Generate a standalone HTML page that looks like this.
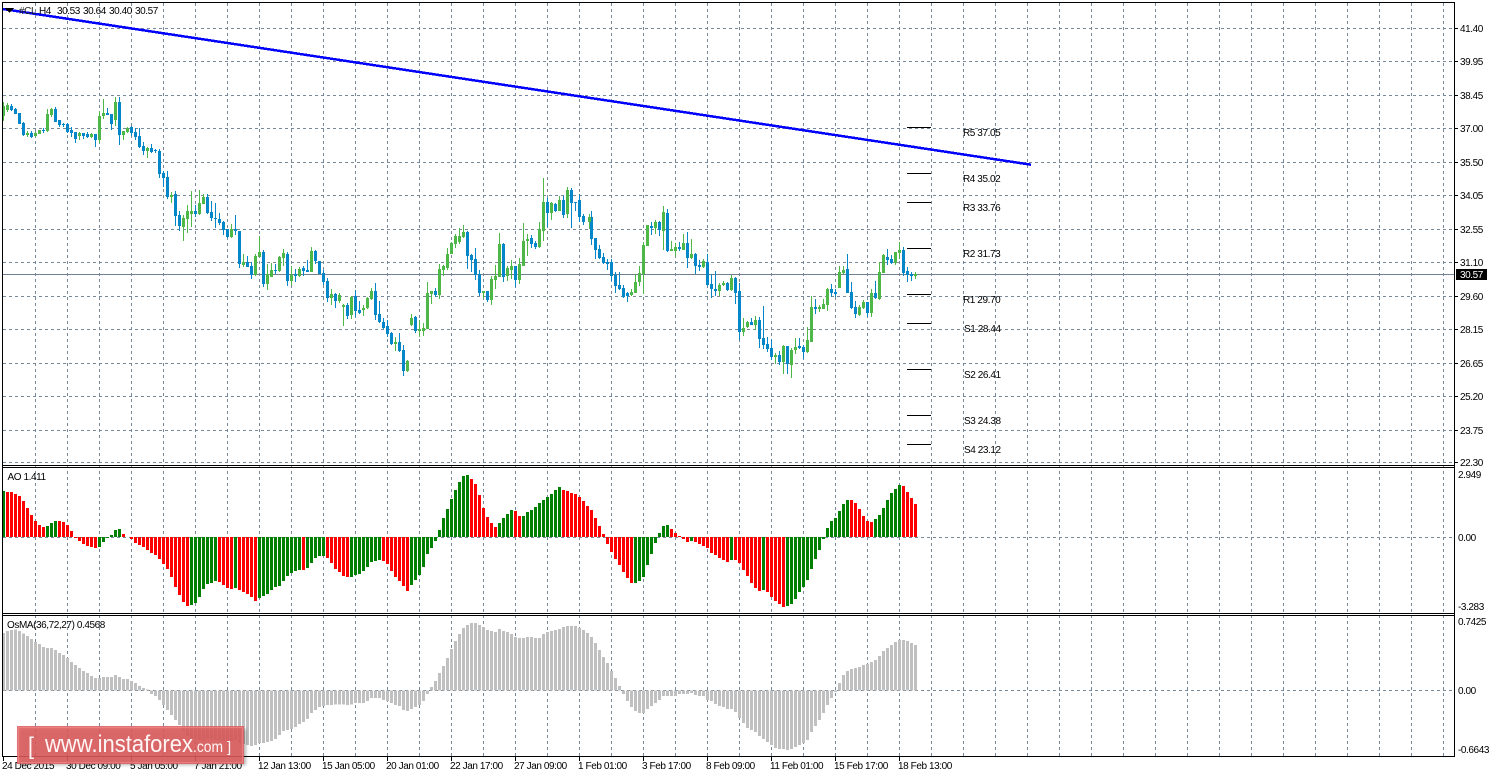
<!DOCTYPE html>
<html><head><meta charset="utf-8"><title>#CL H4</title>
<style>
html,body{margin:0;padding:0;background:#fff;width:1494px;height:777px;overflow:hidden}
svg{display:block}
text{font-family:"Liberation Sans",sans-serif;font-size:10px;letter-spacing:-.42px;fill:#000}
.c path{fill:none;shape-rendering:crispEdges}
</style></head><body>
<svg width="1494" height="777" viewBox="0 0 1494 777" xmlns="http://www.w3.org/2000/svg">
<rect width="1494" height="777" fill="#fff"/>
<g class="c">
<!-- grid -->
<path stroke="#778899" stroke-dasharray="3 3" d="M35.5 3V756M67.5 3V756M99.5 3V756M131.5 3V756M163.5 3V756M195.5 3V756M227.5 3V756M259.5 3V756M291.5 3V756M323.5 3V756M355.5 3V756M387.5 3V756M419.5 3V756M451.5 3V756M483.5 3V756M515.5 3V756M547.5 3V756M579.5 3V756M611.5 3V756M643.5 3V756M675.5 3V756M707.5 3V756M739.5 3V756M771.5 3V756M803.5 3V756M835.5 3V756M867.5 3V756M899.5 3V756M931.5 3V756M963.5 3V756M995.5 3V756M1027.5 3V756M1059.5 3V756M1091.5 3V756M1123.5 3V756M1155.5 3V756M1187.5 3V756M1219.5 3V756M1251.5 3V756M1283.5 3V756M1315.5 3V756M1347.5 3V756M1379.5 3V756M1411.5 3V756M1443.5 3V756"/>
<path stroke="#778899" stroke-dasharray="3 3" d="M3 28.5H1454M3 61.5H1454M3 95.5H1454M3 128.5H1454M3 162.5H1454M3 195.5H1454M3 229.5H1454M3 262.5H1454M3 296.5H1454M3 329.5H1454M3 363.5H1454M3 396.5H1454M3 430.5H1454M3 462.5H1454M3 537.5H1454M3 690.5H1454"/>
<!-- current price line -->
<path stroke="#708090" d="M3 274.5H1454"/>
<!-- wicks -->
<path stroke="#0487c8" d="M11.5 104V111M15.5 108V114M19.5 113V124M23.5 122V136M31.5 131V138M43.5 128V133M55.5 107V122M59.5 120V127M63.5 123V127M67.5 123V133M71.5 127V137M75.5 132V143M83.5 133V139M87.5 132V138M95.5 134V147M107.5 108V115M111.5 114V130M119.5 97V145M131.5 126V136M135.5 128V140M139.5 128V148M143.5 142V155M151.5 144V153M155.5 149V153M159.5 149V178M163.5 171V187M167.5 171V199M175.5 191V226M179.5 211V231M195.5 205V217M207.5 194V214M211.5 201V221M215.5 203V228M219.5 213V225M223.5 221V235M227.5 229V238M235.5 215V235M239.5 231V268M247.5 256V267M251.5 262V279M263.5 250V287M275.5 264V274M287.5 252V286M295.5 269V282M303.5 266V276M307.5 260V272M315.5 250V264M319.5 261V274M323.5 270V285M327.5 278V302M335.5 293V308M347.5 303V319M355.5 290V317M359.5 301V314M375.5 283V320M379.5 301V323M383.5 318V329M387.5 320V337M391.5 332V345M399.5 333V352M403.5 345V376M415.5 316V333M435.5 288V297M467.5 231V269M471.5 254V272M475.5 248V280M479.5 270V296M487.5 291V302M503.5 243V282M515.5 266V287M531.5 235V248M535.5 241V249M547.5 198V227M555.5 203V212M563.5 196V218M571.5 188V228M575.5 202V211M579.5 194V222M583.5 214V225M591.5 211V245M595.5 238V259M599.5 245V259M603.5 253V264M607.5 259V270M611.5 259V281M615.5 272V293M619.5 272V290M623.5 285V298M627.5 292V302M651.5 222V235M659.5 221V236M667.5 209V252M679.5 242V251M687.5 232V268M695.5 253V274M699.5 260V271M707.5 254V286M711.5 274V298M715.5 271V296M727.5 282V291M735.5 277V304M739.5 283V340M751.5 318V325M759.5 317V348M763.5 306V349M767.5 337V352M771.5 339V360M779.5 351V365M787.5 346V374M799.5 338V349M803.5 345V359M815.5 299V314M831.5 284V297M835.5 289V297M847.5 254V293M851.5 282V309M855.5 301V318M867.5 302V317M875.5 281V299M887.5 249V265M891.5 255V264M903.5 247V276M907.5 267V282M911.5 272V281"/>
<path stroke="#4db848" d="M3.5 102V121M7.5 103V112M27.5 131V137M35.5 132V137M39.5 130V134M47.5 109V132M51.5 108V117M79.5 132V140M91.5 133V138M99.5 111V143M103.5 99V119M115.5 97V126M123.5 131V140M127.5 127V133M147.5 147V158M171.5 192V203M183.5 215V241M187.5 205V233M191.5 191V227M199.5 190V215M203.5 194V204M231.5 224V238M243.5 254V267M255.5 254V276M259.5 236V257M267.5 264V290M271.5 263V277M279.5 256V272M283.5 249V266M291.5 266V285M299.5 267V277M311.5 247V272M331.5 289V305M339.5 293V303M343.5 304V326M351.5 296V319M363.5 305V316M367.5 297V309M371.5 288V300M395.5 337V351M407.5 360V372M411.5 314V326M419.5 320V337M423.5 323V336M427.5 282V329M431.5 291V304M439.5 264V299M443.5 265V276M447.5 248V270M451.5 242V254M455.5 234V248M459.5 228V244M463.5 225V238M483.5 291V298M491.5 276V305M495.5 265V289M499.5 233V277M507.5 266V281M511.5 260V279M519.5 258V284M523.5 223V266M527.5 234V256M539.5 222V248M543.5 178V241M551.5 202V220M559.5 196V211M567.5 187V218M589.5 214V229M631.5 289V296M635.5 274V293M639.5 266V286M643.5 242V294M647.5 225V246M655.5 220V234M663.5 206V250M671.5 241V251M675.5 243V257M683.5 234V250M691.5 239V259M703.5 259V268M719.5 283V296M723.5 281V286M731.5 275V291M743.5 318V336M747.5 321V328M755.5 316V330M775.5 353V364M783.5 345V374M791.5 348V378M795.5 338V354M807.5 327V353M811.5 296V342M819.5 305V312M823.5 299V309M827.5 288V311M839.5 266V288M843.5 266V274M859.5 305V316M863.5 300V309M871.5 289V317M879.5 262V300M883.5 254V273M895.5 252V265M899.5 242V259M915.5 272V279"/>
<!-- bodies -->
<path stroke="#0487c8" stroke-width="3" d="M11.5 106V110M15.5 109V114M19.5 113V124M23.5 123V135M31.5 133V137M43.5 130V131M55.5 109V122M59.5 120V125M63.5 124V125M67.5 124V132M71.5 130V133M75.5 132V139M83.5 133V136M87.5 134V137M95.5 134V140M107.5 113V115M111.5 114V124M119.5 102V135M131.5 127V133M135.5 132V137M139.5 136V147M143.5 146V151M151.5 148V152M155.5 150V151M159.5 151V174M163.5 173V178M167.5 177V197M175.5 194V216M179.5 215V226M195.5 211V214M207.5 197V213M211.5 212V218M215.5 218V219M219.5 219V223M223.5 222V230M227.5 229V237M235.5 229V231M239.5 231V264M247.5 262V267M251.5 266V275M263.5 252V284M275.5 270V271M287.5 254V281M295.5 274V276M303.5 268V271M307.5 270V272M315.5 251V261M319.5 261V274M323.5 273V282M327.5 281V298M335.5 294V301M347.5 305V316M355.5 296V311M359.5 310V313M375.5 291V315M379.5 314V322M383.5 322V328M387.5 326V334M391.5 333V344M399.5 342V351M403.5 350V371M415.5 317V331M435.5 291V295M467.5 232V256M471.5 255V260M475.5 259V275M479.5 274V293M487.5 291V300M503.5 244V277M515.5 266V280M531.5 238V244M535.5 243V247M547.5 202V213M555.5 204V211M563.5 200V215M571.5 190V203M575.5 202V203M579.5 200V217M583.5 216V222M591.5 217V239M595.5 238V250M599.5 249V258M603.5 257V263M607.5 262V264M611.5 262V276M615.5 275V286M619.5 285V289M623.5 288V297M627.5 293V296M651.5 226V228M659.5 222V230M667.5 213V251M679.5 247V249M687.5 243V258M695.5 254V266M699.5 265V267M707.5 262V285M711.5 284V289M715.5 289V291M727.5 283V290M735.5 278V293M739.5 291V332M751.5 322V325M759.5 320V339M763.5 338V345M767.5 344V349M771.5 348V357M779.5 355V362M787.5 346V364M799.5 346V348M803.5 347V352M815.5 307V309M831.5 289V293M835.5 292V294M847.5 269V293M851.5 292V308M855.5 307V314M867.5 302V313M875.5 293V298M887.5 257V260M891.5 259V263M903.5 250V273M907.5 271V275M911.5 274V276"/>
<path stroke="#4db848" stroke-width="3" d="M3.5 106V116M7.5 105V110M27.5 133V135M35.5 133V136M39.5 130V134M47.5 114V131M51.5 109V115M79.5 133V136M91.5 134V137M99.5 116V140M103.5 113V116M115.5 102V120M123.5 131V135M127.5 128V132M147.5 148V151M171.5 195V197M183.5 218V227M187.5 211V219M191.5 211V214M199.5 203V214M203.5 197V204M231.5 229V237M243.5 262V265M255.5 256V275M259.5 252V257M267.5 274V284M271.5 270V277M279.5 257V271M283.5 253V258M291.5 275V281M299.5 269V276M311.5 251V272M331.5 294V298M339.5 295V301M343.5 305V307M351.5 297V315M363.5 308V310M367.5 298V308M371.5 291V299M395.5 342V344M407.5 361V371M411.5 318V325M419.5 329V331M423.5 328V331M427.5 293V329M431.5 291V294M439.5 269V295M443.5 266V270M447.5 254V268M451.5 243V254M455.5 236V244M459.5 236V242M463.5 232V237M483.5 291V293M491.5 279V300M495.5 276V280M499.5 244V277M507.5 268V276M511.5 266V270M519.5 264V280M523.5 241V266M527.5 239V241M539.5 229V247M543.5 202V231M551.5 203V213M559.5 200V211M567.5 190V214M589.5 217V222M631.5 292V295M635.5 282V293M639.5 273V282M643.5 245V274M647.5 225V246M655.5 222V228M663.5 212V231M671.5 249V251M675.5 247V251M683.5 243V250M691.5 254V258M703.5 261V267M719.5 285V291M723.5 283V285M731.5 278V290M743.5 328V332M747.5 322V327M755.5 320V325M775.5 355V357M783.5 346V362M791.5 350V365M795.5 347V350M807.5 340V352M811.5 307V342M819.5 307V309M823.5 304V309M827.5 289V305M839.5 272V288M843.5 270V273M859.5 307V315M863.5 302V308M871.5 293V313M879.5 272V299M883.5 255V273M895.5 252V263M899.5 250V253M915.5 274V276"/>
<!-- trend line -->
<path stroke="#0000ff" stroke-width="2.5" d="M3 9L1031 164.7"/>
<!-- pivot levels -->
<path stroke="#000" d="M907 127.5H931M907 173.5H931M907 202.5H931M907 248.5H931M907 294.5H931M907 323.5H931M907 369.5H931M907 415.5H931M907 444.5H931"/>
<!-- AO -->
<g transform="translate(0 465) scale(1 .33333)" stroke-width="3">
<path stroke="#008000" d="M3.5 216V78M47.5 216V183M51.5 216V174M55.5 216V168M99.5 216V246M103.5 216V231M107.5 216V219M111.5 216V210M115.5 216V195M119.5 216V192M191.5 216V420M195.5 216V414M199.5 216V396M203.5 216V372M207.5 216V357M211.5 216V354M215.5 216V348M235.5 216V369M259.5 216V399M263.5 216V393M267.5 216V387M271.5 216V375M275.5 216V366M279.5 216V363M283.5 216V348M287.5 216V333M291.5 216V324M295.5 216V318M299.5 216V315M307.5 216V309M311.5 216V294M315.5 216V279M319.5 216V273M323.5 216V273M351.5 216V336M355.5 216V330M359.5 216V327M363.5 216V318M367.5 216V306M371.5 216V291M375.5 216V288M379.5 216V285M411.5 216V360M415.5 216V345M419.5 216V330M423.5 216V306M427.5 216V267M431.5 216V249M435.5 216V228M439.5 216V195M443.5 216V159M447.5 216V132M451.5 216V102M455.5 216V75M459.5 216V51M463.5 216V33M467.5 216V30M499.5 216V174M503.5 216V159M507.5 216V147M511.5 216V135M523.5 216V153M527.5 216V141M531.5 216V135M535.5 216V126M539.5 216V114M543.5 216V105M547.5 216V96M551.5 216V87M555.5 216V75M559.5 216V66M635.5 216V354M639.5 216V348M643.5 216V336M647.5 216V300M651.5 216V267M655.5 216V234M659.5 216V204M663.5 216V183M667.5 216V180M691.5 216V228M731.5 216V285M763.5 216V375M787.5 216V423M791.5 216V417M795.5 216V402M799.5 216V381M803.5 216V366M807.5 216V345M811.5 216V312M815.5 216V282M819.5 216V255M823.5 216V222M827.5 216V189M831.5 216V168M835.5 216V159M839.5 216V138M843.5 216V117M847.5 216V105M875.5 216V162M879.5 216V150M883.5 216V129M887.5 216V105M891.5 216V84M895.5 216V72M899.5 216V60"/>
<path stroke="#ff0000" d="M7.5 216V81M11.5 216V81M15.5 216V87M19.5 216V93M23.5 216V108M27.5 216V129M31.5 216V150M35.5 216V168M39.5 216V180M43.5 216V186M59.5 216V168M63.5 216V171M67.5 216V180M71.5 216V198M75.5 216V219M79.5 216V228M83.5 216V237M87.5 216V243M91.5 216V246M95.5 216V249M123.5 216V207M127.5 216V216M131.5 216V222M135.5 216V234M139.5 216V240M143.5 216V246M147.5 216V255M151.5 216V264M155.5 216V270M159.5 216V282M163.5 216V297M167.5 216V312M171.5 216V336M175.5 216V366M179.5 216V390M183.5 216V411M187.5 216V423M219.5 216V351M223.5 216V360M227.5 216V369M231.5 216V372M239.5 216V375M243.5 216V381M247.5 216V387M251.5 216V396M255.5 216V408M303.5 216V315M327.5 216V279M331.5 216V294M335.5 216V312M339.5 216V321M343.5 216V333M347.5 216V336M383.5 216V288M387.5 216V297M391.5 216V318M395.5 216V336M399.5 216V348M403.5 216V363M407.5 216V378M471.5 216V42M475.5 216V57M479.5 216V90M483.5 216V129M487.5 216V156M491.5 216V174M495.5 216V186M515.5 216V138M519.5 216V153M563.5 216V75M567.5 216V78M571.5 216V84M575.5 216V87M579.5 216V96M583.5 216V108M587.5 216V123M591.5 216V135M595.5 216V159M599.5 216V183M603.5 216V207M607.5 216V237M611.5 216V261M615.5 216V282M619.5 216V300M623.5 216V321M627.5 216V339M631.5 216V354M671.5 216V192M675.5 216V204M679.5 216V213M683.5 216V222M687.5 216V231M695.5 216V231M699.5 216V237M703.5 216V243M707.5 216V249M711.5 216V264M715.5 216V270M719.5 216V279M723.5 216V285M727.5 216V291M735.5 216V285M739.5 216V294M743.5 216V315M747.5 216V333M751.5 216V354M755.5 216V369M759.5 216V378M767.5 216V381M771.5 216V396M775.5 216V408M779.5 216V417M783.5 216V426M851.5 216V105M855.5 216V114M859.5 216V132M863.5 216V153M867.5 216V168M871.5 216V171M903.5 216V63M907.5 216V81M911.5 216V99M915.5 216V117"/>
</g>
<!-- OsMA -->
<g transform="translate(0 615) scale(1 .33333)">
<path stroke="#c0c0c0" stroke-width="3" d="M3.5 226V54M7.5 226V48M11.5 226V45M15.5 226V43M19.5 226V48M23.5 226V55M27.5 226V63M31.5 226V72M35.5 226V81M39.5 226V87M43.5 226V96M47.5 226V99M51.5 226V99M55.5 226V105M59.5 226V114M63.5 226V120M67.5 226V129M71.5 226V141M75.5 226V150M79.5 226V159M83.5 226V168M87.5 226V174M91.5 226V183M95.5 226V189M99.5 226V189M103.5 226V186M107.5 226V186M111.5 226V186M115.5 226V180M119.5 226V186M123.5 226V192M127.5 226V192M131.5 226V198M135.5 226V204M139.5 226V213M143.5 226V219M147.5 226V224M151.5 226V237M155.5 226V243M159.5 226V255M163.5 226V270M167.5 226V285M171.5 226V300M175.5 226V315M179.5 226V330M183.5 226V348M187.5 226V363M191.5 226V372M195.5 226V372M199.5 226V375M203.5 226V375M207.5 226V372M211.5 226V372M215.5 226V375M219.5 226V378M223.5 226V378M227.5 226V378M231.5 226V378M235.5 226V375M239.5 226V384M243.5 226V387M247.5 226V390M251.5 226V393M255.5 226V390M259.5 226V384M263.5 226V384M267.5 226V381M271.5 226V378M275.5 226V372M279.5 226V360M283.5 226V348M287.5 226V345M291.5 226V342M295.5 226V336M299.5 226V327M303.5 226V321M307.5 226V312M311.5 226V294M315.5 226V285M319.5 226V276M323.5 226V273M327.5 226V270M331.5 226V270M335.5 226V268M339.5 226V268M343.5 226V268M347.5 226V270M351.5 226V268M355.5 226V264M359.5 226V264M363.5 226V264M367.5 226V258M371.5 226V249M375.5 226V249M379.5 226V249M383.5 226V255M387.5 226V258M391.5 226V264M395.5 226V270M399.5 226V273M403.5 226V285M407.5 226V288M411.5 226V282M415.5 226V276M419.5 226V270M423.5 226V258M427.5 226V237M431.5 226V216M435.5 226V198M439.5 226V174M443.5 226V153M447.5 226V129M451.5 226V102M455.5 226V78M459.5 226V57M463.5 226V39M467.5 226V30M471.5 226V24M475.5 226V24M479.5 226V30M483.5 226V36M487.5 226V45M491.5 226V48M495.5 226V51M499.5 226V42M503.5 226V48M507.5 226V51M511.5 226V57M515.5 226V66M519.5 226V69M523.5 226V69M527.5 226V66M531.5 226V66M535.5 226V69M539.5 226V69M543.5 226V57M547.5 226V51M551.5 226V48M555.5 226V45M559.5 226V42M563.5 226V36M567.5 226V33M571.5 226V33M575.5 226V33M579.5 226V39M583.5 226V45M587.5 226V54M591.5 226V66M595.5 226V84M599.5 226V105M603.5 226V126M607.5 226V144M611.5 226V168M615.5 226V189M619.5 226V213M623.5 226V237M627.5 226V258M631.5 226V276M635.5 226V288M639.5 226V294M643.5 226V294M647.5 226V282M651.5 226V273M655.5 226V264M659.5 226V255M663.5 226V243M667.5 226V243M671.5 226V243M675.5 226V243M679.5 226V237M683.5 226V237M687.5 226V237M691.5 226V234M695.5 226V240M699.5 226V243M703.5 226V243M707.5 226V255M711.5 226V258M715.5 226V267M719.5 226V273M723.5 226V276M727.5 226V282M731.5 226V282M735.5 226V291M739.5 226V309M743.5 226V324M747.5 226V339M751.5 226V345M755.5 226V351M759.5 226V363M763.5 226V372M767.5 226V381M771.5 226V390M775.5 226V399M779.5 226V402M783.5 226V402M787.5 226V405M791.5 226V402M795.5 226V396M799.5 226V390M803.5 226V384M807.5 226V375M811.5 226V351M815.5 226V333M819.5 226V315M823.5 226V294M827.5 226V270M831.5 226V249M835.5 226V231M839.5 226V204M843.5 226V180M847.5 226V168M851.5 226V162M855.5 226V159M859.5 226V156M863.5 226V150M867.5 226V147M871.5 226V141M875.5 226V135M879.5 226V123M883.5 226V108M887.5 226V99M891.5 226V90M895.5 226V81M899.5 226V75M903.5 226V75M907.5 226V78M911.5 226V84M915.5 226V90"/>
</g>
<!-- frames -->
<path stroke="#000" d="M2.5 2V757M1454.5 2V757M2 2.5H1455M2 465.5H1455M2 467.5H1455M2 613.5H1455M2 615.5H1455M2 756.5H1455"/>
<!-- ticks -->
<path stroke="#000" d="M1455 28.5H1458M1455 61.5H1458M1455 95.5H1458M1455 128.5H1458M1455 162.5H1458M1455 195.5H1458M1455 229.5H1458M1455 262.5H1458M1455 296.5H1458M1455 329.5H1458M1455 363.5H1458M1455 396.5H1458M1455 430.5H1458M1455 462.5H1458M3.5 757V761M67.5 757V761M131.5 757V761M195.5 757V761M259.5 757V761M323.5 757V761M387.5 757V761M451.5 757V761M515.5 757V761M579.5 757V761M643.5 757V761M707.5 757V761M771.5 757V761M835.5 757V761M899.5 757V761"/>
<!-- header triangle -->
<path stroke="none" style="fill:#000" d="M5 8H14L9.5 13Z"/>
</g>
<!-- header text -->
<text x="19" y="14" style="fill:#222">#CL</text>
<text x="39" y="14">H4</text>
<text x="57" y="14">30.53</text><text x="83" y="14">30.64</text><text x="109" y="14">30.40</text><text x="135" y="14">30.57</text>
<!-- price axis -->
<text x="1460" y="32">41.40</text><text x="1460" y="65">39.95</text><text x="1460" y="99">38.45</text><text x="1460" y="132">37.00</text><text x="1460" y="166">35.50</text><text x="1460" y="199">34.05</text><text x="1460" y="233">32.55</text><text x="1460" y="266">31.10</text><text x="1460" y="300">29.60</text><text x="1460" y="333">28.15</text><text x="1460" y="367">26.65</text><text x="1460" y="400">25.20</text><text x="1460" y="434">23.75</text><text x="1460" y="466">22.30</text>
<rect x="1456" y="269" width="31" height="11" fill="#000"/>
<text x="1460" y="278" style="fill:#fff">30.57</text>
<text x="1458" y="478">2.949</text><text x="1458" y="541">0.00</text><text x="1458" y="610">-3.283</text>
<text x="1458" y="625">0.7425</text><text x="1458" y="694">0.00</text><text x="1458" y="753">-0.6643</text>
<!-- pivot labels -->
<text x="963" y="136">R5 37.05</text><text x="963" y="182">R4 35.02</text><text x="963" y="211">R3 33.76</text><text x="963" y="257">R2 31.73</text><text x="963" y="303">R1 29.70</text><text x="964" y="332">S1 28.44</text><text x="964" y="378">S2 26.41</text><text x="964" y="424">S3 24.38</text><text x="964" y="453">S4 23.12</text>
<!-- indicator labels -->
<text x="7.5" y="480">AO 1.411</text>
<text x="7" y="628">OsMA(36,72,27) 0.4568</text>
<!-- time axis -->
<text x="2" y="769">24 Dec 2015</text><text x="66" y="769">30 Dec 09:00</text><text x="130" y="769">5 Jan 05:00</text><text x="194" y="769">7 Jan 21:00</text><text x="258" y="769">12 Jan 13:00</text><text x="322" y="769">15 Jan 05:00</text><text x="386" y="769">20 Jan 01:00</text><text x="450" y="769">22 Jan 17:00</text><text x="514" y="769">27 Jan 09:00</text><text x="578" y="769">1 Feb 01:00</text><text x="642" y="769">3 Feb 17:00</text><text x="706" y="769">8 Feb 09:00</text><text x="770" y="769">11 Feb 01:00</text><text x="834" y="769">15 Feb 17:00</text><text x="898" y="769">18 Feb 13:00</text>
<!-- logo -->
<defs><filter id="s" x="-5%" y="-20%" width="110%" height="140%"><feGaussianBlur stdDeviation="1.5"/></filter></defs>
<rect x="19" y="729" width="227" height="36" fill="#000" opacity=".3" filter="url(#s)"/>
<rect x="17" y="726" width="227" height="38" fill="#df5c5c" opacity=".87"/>
<rect x="18.5" y="727.5" width="224" height="35" fill="none" stroke="#ee9090" opacity=".6"/>
<text x="28" y="754" textLength="6" lengthAdjust="spacingAndGlyphs" style="font-size:24px;letter-spacing:0;fill:#fff5f5">[</text>
<text x="45" y="752" textLength="148" lengthAdjust="spacingAndGlyphs" style="font-size:24px;letter-spacing:0;fill:#fff5f5">www.instaforex</text>
<text x="193" y="752" textLength="30" lengthAdjust="spacingAndGlyphs" style="font-size:16px;letter-spacing:0;fill:#fff5f5">.com</text>
<text x="227" y="752" style="font-size:15px;letter-spacing:0;fill:#fff5f5">]</text>
</svg>
</body></html>
